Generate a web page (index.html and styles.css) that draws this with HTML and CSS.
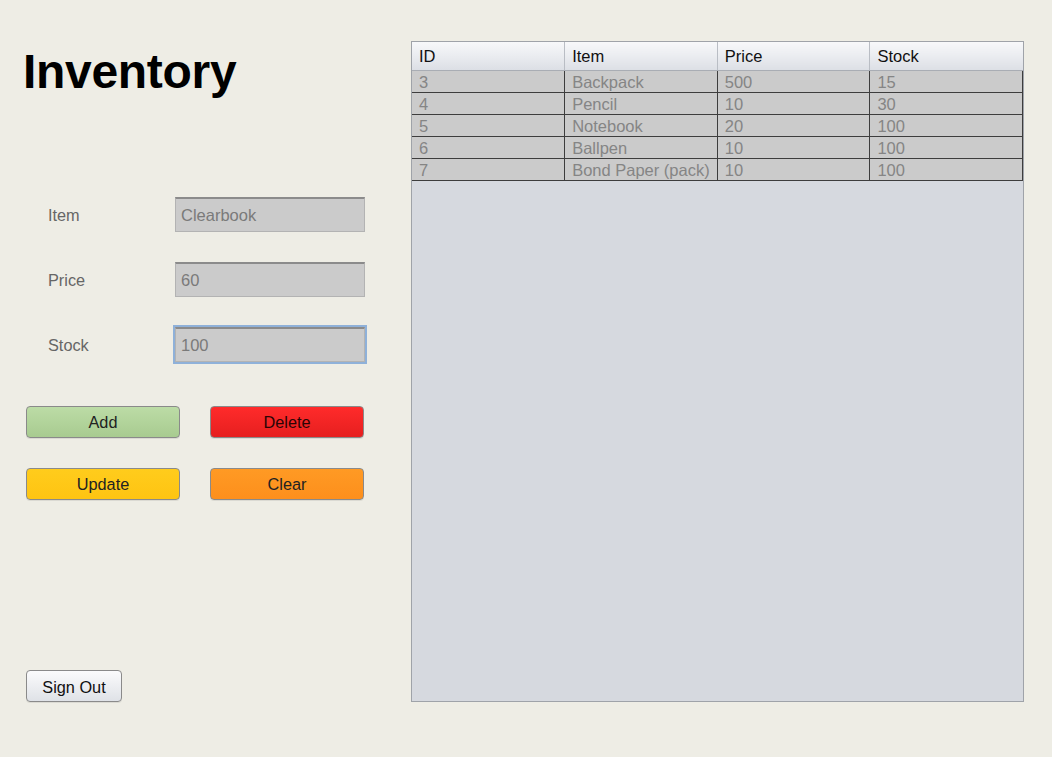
FILE: index.html
```html
<!DOCTYPE html>
<html lang="en">
<head>
<meta charset="utf-8">
<title>Inventory</title>
<link rel="stylesheet" href="styles.css">
</head>
<body>
<div class="app">
  <div class="side">
    <h1 class="title">Inventory</h1>
    <div class="form">
      <label class="form-label" for="f-item">Item</label>
      <input class="field" id="f-item" type="text" value="Clearbook" readonly>
      <label class="form-label" for="f-price">Price</label>
      <input class="field" id="f-price" type="text" value="60" readonly>
      <label class="form-label" for="f-stock">Stock</label>
      <input class="field is-focused" id="f-stock" type="text" value="100" readonly>
    </div>
    <div class="actions">
      <button class="btn btn-add" type="button">Add</button>
      <button class="btn btn-delete" type="button">Delete</button>
      <button class="btn btn-update" type="button">Update</button>
      <button class="btn btn-clear" type="button">Clear</button>
    </div>
    <button class="btn btn-signout" type="button">Sign Out</button>
  </div>
  <div class="grid-panel">
    <table class="grid">
      <thead>
        <tr><th>ID</th><th>Item</th><th>Price</th><th>Stock</th></tr>
      </thead>
      <tbody>
        <tr><td>3</td><td>Backpack</td><td>500</td><td>15</td></tr>
        <tr><td>4</td><td>Pencil</td><td>10</td><td>30</td></tr>
        <tr><td>5</td><td>Notebook</td><td>20</td><td>100</td></tr>
        <tr><td>6</td><td>Ballpen</td><td>10</td><td>100</td></tr>
        <tr><td>7</td><td>Bond Paper (pack)</td><td>10</td><td>100</td></tr>
      </tbody>
    </table>
  </div>
</div>
</body>
</html>
```

FILE: styles.css
```css
html, body {
  margin: 0;
  padding: 0;
}
body {
  background: #eeede5;
  font-family: "Liberation Sans", Arial, sans-serif;
  font-size: 16px;
  color: #222;
}
.app {
  display: flex;
  width: 1052px;
  height: 757px;
  box-sizing: border-box;
  padding: 41px 28px 0 0;
}
.side {
  width: 411px;
  flex: none;
  display: flex;
  flex-direction: column;
  padding: 0 0 55px 0;
  box-sizing: border-box;
}
.title {
  margin: 7px 0 0 23px;
  font-size: 48px;
  line-height: 48px;
  font-weight: bold;
  color: #000;
  letter-spacing: -0.3px;
}
.form {
  margin: 101px 0 0 48px;
  display: grid;
  grid-template-columns: 127px 190px;
  row-gap: 30px;
  align-items: center;
}
.form-label {
  color: #666;
  font-size: 16.3px;
  padding-top: 2px;
}
.field {
  box-sizing: border-box;
  width: 190px;
  height: 35px;
  margin: 0;
  padding: 1px 0 0 5px;
  background: #cbcbcb;
  border: 1px solid #b3b3b3;
  border-top: 2px solid #8b8b8b;
  color: #7a7a7a;
  font-family: "Liberation Sans", Arial, sans-serif;
  font-size: 16.5px;
  outline: none;
}
.field.is-focused {
  outline: 2px solid #8fb1d9;
  outline-offset: 0;
}
.actions {
  margin: 44px 0 0 26px;
  display: grid;
  grid-template-columns: 154px 154px;
  column-gap: 30px;
  row-gap: 30px;
}
.btn {
  box-sizing: border-box;
  height: 32px;
  margin: 0;
  padding: 1px 0 0;
  border: 1px solid #8a8a8a;
  border-radius: 4px;
  font-family: "Liberation Sans", Arial, sans-serif;
  font-size: 16.3px;
  color: #222;
  box-shadow: 0 1px 0 rgba(0,0,0,0.08);
}
.btn-add {
  background: linear-gradient(#bcdca6, #a8cb90);
}
.btn-delete {
  background: linear-gradient(#ff2b2b, #e61f1f);
  color: #2a0505;
}
.btn-update {
  background: linear-gradient(#ffcc1c, #fec412);
}
.btn-clear {
  background: linear-gradient(#ff9a24, #fd8f1c);
}
.btn-signout {
  margin: auto 0 0 26px;
  width: 96px;
  padding-top: 2px;
  background: linear-gradient(#fbfbfc, #dfe2e7);
  color: #111;
}
.grid-panel {
  flex: none;
  width: 613px;
  height: 661px;
  box-sizing: border-box;
  border: 1px solid #9fa3a9;
  background: #d6d9df;
}
.grid {
  width: 100%;
  table-layout: fixed;
  border-collapse: collapse;
}
.grid th {
  height: 27px;
  padding: 1px 7px 0;
  text-align: left;
  font-weight: normal;
  color: #111;
  font-size: 16.5px;
  background: linear-gradient(#f7f8fa, #e9ebef 55%, #dcdfe5);
  border-right: 1px solid #b9bdc4;
  border-bottom: 1px solid #a9adb4;
}
.grid th:last-child {
  border-right: none;
}
.grid td {
  height: 19px;
  padding: 2px 7px 0;
  line-height: 19px;
  font-size: 16.5px;
  color: #858585;
  background: #cbcbcb;
  border: 1px solid #3d3d3d;
  white-space: nowrap;
  overflow: hidden;
}
.grid td:first-child {
  border-left: none;
}
```
